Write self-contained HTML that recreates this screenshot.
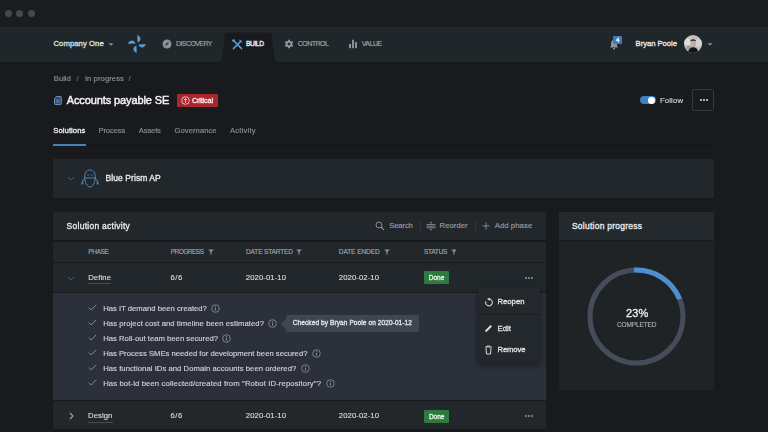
<!DOCTYPE html>
<html><head><meta charset="utf-8">
<style>
*{margin:0;padding:0;box-sizing:border-box}
html,body{width:768px;height:432px;overflow:hidden;background:#191a1e;font-family:"Liberation Sans",sans-serif;position:relative}
.a{position:absolute}
.t{position:absolute;white-space:nowrap;height:20px;line-height:20px;-webkit-text-stroke-width:0.15px}
.b{-webkit-text-stroke-width:0.3px}
.bb{-webkit-text-stroke-width:0.45px}
</style></head><body><div style="position:absolute;left:0;top:0;width:768px;height:432px;filter:blur(0.35px)">
<!-- title bar -->
<div class="a" style="left:0;top:0;width:768px;height:26.5px;background:#1b1c1f"></div>
<div class="a" style="left:5px;top:10px;width:7px;height:7px;border-radius:50%;background:#47484c"></div>
<div class="a" style="left:16px;top:10px;width:7px;height:7px;border-radius:50%;background:#47484c"></div>
<div class="a" style="left:28px;top:10px;width:7px;height:7px;border-radius:50%;background:#47484c"></div>
<!-- nav -->
<div class="a" style="left:0;top:26.5px;width:768px;height:35.2px;background:#20272a"></div>
<svg class="a" style="left:212px;top:30.5px" width="76" height="32" viewBox="0 0 76 32"><path d="M5 32 C9 32 10.2 29 10.8 23.5 L12.6 4.5 C12.8 2.6 13.6 1.5 15.5 1.5 L57 1.5 C58.9 1.5 59.7 2.6 59.9 4.5 L62.2 23.5 C63 29 64 32 68.5 32 Z" fill="#191a1e"/></svg>
<div class="t b" style="left:53.5px;top:34px;font-size:7.7px;letter-spacing:0.06px;color:#dfe1e3">Company One</div>
<svg class="a" style="left:107px;top:42px" width="8" height="5"><path d="M1.5 1.2 L4 3.8 L6.5 1.2Z" fill="#8a8f95"/></svg>
<!-- logo -->
<svg class="a" style="left:127px;top:34px" width="20" height="20" viewBox="0 0 20 20"><g fill="#5a9fd8">
<path id="bl" d="M10.3 1 C14.2 2.8 14.8 6.6 10.6 8.6 Z"/>
<path d="M10.3 1 C14.2 2.8 14.8 6.6 10.6 8.6 Z" transform="rotate(90 10 10)"/>
<path d="M10.3 1 C14.2 2.8 14.8 6.6 10.6 8.6 Z" transform="rotate(180 10 10)"/>
<path d="M10.3 1 C14.2 2.8 14.8 6.6 10.6 8.6 Z" transform="rotate(270 10 10)"/>
</g></svg>
<!-- discovery -->
<svg class="a" style="left:162px;top:39px" width="10" height="10" viewBox="0 0 10 10"><circle cx="5" cy="5" r="4.5" fill="#8b9199"/><path d="M7 3 L4.4 4.4 L3 7 L5.6 5.6Z" fill="#21272a"/></svg>
<div class="t" style="left:176px;top:34px;font-size:7px;letter-spacing:-0.58px;color:#a0a5ab;-webkit-text-stroke-width:0.15px">DISCOVERY</div>
<!-- build -->
<svg class="a" style="left:231.5px;top:38.5px" width="11" height="11" viewBox="0 0 11 11"><g stroke="#5b9bd8" stroke-width="1.5" stroke-linecap="round" fill="none"><path d="M2.2 2.2 L9.6 9.6"/><path d="M9 2 L1.4 9.6"/></g><path d="M7.6 0.4 L10.6 3.4 L9.6 3.6 L7.4 1.4Z" fill="#5b9bd8"/><circle cx="1.6" cy="1.6" r="1.4" fill="#5b9bd8"/></svg>
<div class="t b" style="left:246px;top:34px;font-size:6.7px;letter-spacing:-0.43px;color:#f0f2f4">BUILD</div>
<!-- control -->
<svg class="a" style="left:283.6px;top:39px" width="10" height="10" viewBox="0 0 10 10"><g fill="#8b9199"><circle cx="5" cy="5" r="3.3"/><rect x="4" y="0.7" width="2" height="8.6" rx="0.4"/><rect x="4" y="0.7" width="2" height="8.6" rx="0.4" transform="rotate(60 5 5)"/><rect x="4" y="0.7" width="2" height="8.6" rx="0.4" transform="rotate(-60 5 5)"/></g><circle cx="5" cy="5" r="1.3" fill="#20272a"/></svg>
<div class="t" style="left:297.7px;top:34px;font-size:7px;letter-spacing:-0.5px;color:#a0a5ab;-webkit-text-stroke-width:0.15px">CONTROL</div>
<!-- value -->
<svg class="a" style="left:348px;top:39px" width="10" height="10" viewBox="0 0 10 10"><g fill="#8b9199"><rect x="1" y="5" width="2" height="4.2"/><rect x="4" y="0.7" width="2" height="8.5"/><rect x="7" y="3.1" width="2" height="6.1"/></g></svg>
<div class="t" style="left:361.7px;top:34px;font-size:7px;letter-spacing:-0.5px;color:#a0a5ab;-webkit-text-stroke-width:0.15px">VALUE</div>
<!-- right nav -->
<svg class="a" style="left:608px;top:38px" width="12" height="12" viewBox="0 0 12 12"><path d="M6 2 C3.5 2 3 4 3 6 L3 8 L2 9.5 L10 9.5 L9 8 L9 6 C9 4 8.5 2 6 2Z" fill="#8e949a"/><rect x="5" y="10" width="2" height="1.3" fill="#8e949a"/></svg>
<div class="a" style="left:613px;top:35.6px;width:9.2px;height:8.2px;background:#3b7cc0;border-radius:1px"></div>
<div class="t b" style="left:613px;top:29.5px;width:9.2px;text-align:center;font-size:6px;color:#fff">4</div>
<div class="t b" style="left:635.6px;top:34px;font-size:7.7px;letter-spacing:-0.05px;color:#e6e8ea">Bryan Poole</div>
<svg class="a" style="left:683.8px;top:35.1px" width="18" height="18" viewBox="0 0 18 18"><defs><clipPath id="cp"><circle cx="9" cy="9" r="9"/></clipPath></defs><g clip-path="url(#cp)"><rect width="18" height="18" fill="#bfc3bf"/><circle cx="3.5" cy="7" r="3.5" fill="#dcdfdc"/><circle cx="14.5" cy="8" r="3.8" fill="#d2d5d2"/><circle cx="5" cy="13" r="2.5" fill="#9da19d"/><ellipse cx="9.2" cy="8.6" rx="2.7" ry="3.5" fill="#c4aca2"/><path d="M6.3 6.6 C6.3 3.4 12 3.4 12 6.6 C11 5.5 7.4 5.5 6.3 6.6Z" fill="#2a2324"/><path d="M4 18 C4.5 13.5 7 12.2 9.2 12.2 C11.5 12.2 14 13.5 14.5 18Z" fill="#141414"/></g></svg>
<svg class="a" style="left:706px;top:42px" width="8" height="5"><path d="M1.5 1.2 L4 3.8 L6.5 1.2Z" fill="#8a8f95"/></svg>

<!-- breadcrumb -->
<div class="t" style="left:53.75px;top:68.60px;font-size:7.7px;color:#8e9197">Build</div>
<div class="t" style="left:76.5px;top:68.60px;font-size:7.7px;color:#6e7177">/</div>
<div class="t" style="left:84.9px;top:68.60px;font-size:7.7px;letter-spacing:0.06px;color:#8e9197">In progress</div>
<div class="t" style="left:128.5px;top:68.6px;font-size:7.7px;color:#6e7177">/</div>
<!-- title -->
<svg class="a" style="left:53.8px;top:96px" width="8" height="9" viewBox="0 0 8 9"><path d="M2.6 0.5 L6.4 0.5 Q7.3 0.5 7.3 1.4 L7.3 7.6 Q7.3 8.5 6.4 8.5 L1.4 8.5 Q0.5 8.5 0.5 7.6 L0.5 2.6Z" fill="#2f4c69" stroke="#86acd2" stroke-width="0.8"/><path d="M2.2 4.3 L5.6 4.3 M2.2 6 L5.6 6" stroke="#86acd2" stroke-width="0.7"/></svg>
<div class="t bb" style="left:66.7px;top:89.7px;font-size:11px;letter-spacing:-0.11px;color:#f2f3f5">Accounts payable SE</div>
<div class="a" style="left:176.6px;top:93.6px;width:41px;height:13.3px;background:#a8272c;border-radius:1px"></div>
<svg class="a" style="left:181px;top:95.8px" width="9" height="9" viewBox="0 0 9 9"><circle cx="4.5" cy="4.5" r="3.8" fill="none" stroke="#f0c9ca" stroke-width="0.9"/><path d="M4.5 6.8 L4.5 2.6 M2.9 4.2 L4.5 2.6 L6.1 4.2" fill="none" stroke="#f0c9ca" stroke-width="0.9"/></svg>
<div class="t b" style="left:191.9px;top:90.60px;font-size:7.3px;letter-spacing:-0.17px;color:#fbeeee">Critical</div>
<!-- follow -->
<div class="a" style="left:640px;top:96.1px;width:15.5px;height:8.2px;border-radius:4.1px;background:#3e80c2"></div>
<div class="a" style="left:648px;top:96.8px;width:6.8px;height:6.8px;border-radius:50%;background:#fff"></div>
<div class="t" style="left:659.9px;top:90.50px;font-size:7.7px;letter-spacing:0.18px;color:#d2d5d8">Follow</div>
<div class="a" style="left:692px;top:89.3px;width:22.3px;height:21.7px;border:1px solid #35383d;border-radius:2px"></div>
<div class="a" style="left:699.5px;top:99.4px;width:2px;height:2px;border-radius:50%;background:#e0e2e4"></div>
<div class="a" style="left:702.5px;top:99.4px;width:2px;height:2px;border-radius:50%;background:#e0e2e4"></div>
<div class="a" style="left:705.5px;top:99.4px;width:2px;height:2px;border-radius:50%;background:#e0e2e4"></div>
<!-- tabs -->
<div class="t b" style="left:53.3px;top:120.70px;font-size:7.7px;letter-spacing:0.05px;color:#eceef0">Solutions</div>
<div class="t" style="left:98.4px;top:120.70px;font-size:7.7px;letter-spacing:-0.13px;color:#8c9096">Process</div>
<div class="t" style="left:138.8px;top:120.70px;font-size:7.7px;letter-spacing:-0.18px;color:#8c9096">Assets</div>
<div class="t" style="left:174.5px;top:120.70px;font-size:7.7px;letter-spacing:0.03px;color:#8c9096">Governance</div>
<div class="t" style="left:229.9px;top:120.70px;font-size:7.7px;letter-spacing:0.19px;color:#8c9096">Activity</div>
<div class="a" style="left:53px;top:144.8px;width:661px;height:1.4px;background:#141518"></div>
<div class="a" style="left:53px;top:144px;width:33px;height:2.2px;background:#4a80b8"></div>

<!-- blue prism card -->
<div class="a" style="left:53px;top:159.3px;width:661.2px;height:39.2px;background:#21272a"></div>
<svg class="a" style="left:67px;top:176px" width="8" height="5"><path d="M1 1 L4 4 L7 1" fill="none" stroke="#5a6068" stroke-width="0.9"/></svg>
<svg class="a" style="left:80px;top:169px" width="20" height="19" viewBox="0 0 20 19"><g fill="none" stroke="#5b8fc4" stroke-width="0.9"><path d="M10 1 C14 1 15.3 4 15.3 8 C15.3 13 13 18 10 18 C7 18 4.7 13 4.7 8 C4.7 4 6 1 10 1Z"/><path d="M4.8 9 L15.2 9"/><path d="M5 9 L2.5 12 L1.5 15.5 M2.5 12 L3.2 15.5"/><path d="M15 9 L17.5 12 L18.5 15.5 M17.5 12 L16.8 15.5"/></g><circle cx="8" cy="6" r="0.7" fill="#5b8fc4"/><circle cx="12" cy="6" r="0.7" fill="#5b8fc4"/></svg>
<div class="t b" style="left:105.6px;top:168.1px;font-size:8.5px;letter-spacing:0.07px;color:#eceef0">Blue Prism AP</div>

<!-- solution activity card -->
<div class="a" style="left:53px;top:212px;width:493px;height:220px;background:#21272a"></div>
<div class="t b" style="left:66.6px;top:215.8px;font-size:8.5px;letter-spacing:0.26px;color:#eceef0">Solution activity</div>
<svg class="a" style="left:375px;top:221px" width="10" height="10" viewBox="0 0 10 10"><circle cx="4" cy="4" r="3" fill="none" stroke="#8c9096" stroke-width="1"/><path d="M6.2 6.2 L9 9" stroke="#8c9096" stroke-width="1.1"/></svg>
<div class="t" style="left:389.2px;top:215.8px;font-size:7.7px;letter-spacing:-0.13px;color:#9a9ea4">Search</div>
<div class="a" style="left:419.5px;top:221px;width:1px;height:10.5px;background:#2f3439"></div>
<svg class="a" style="left:426px;top:221px" width="10" height="10" viewBox="0 0 10 10"><g stroke="#8c9096" stroke-width="0.9"><path d="M0.5 3.6 L9.5 3.6 M0.5 5.2 L9.5 5.2 M0.5 6.8 L9.5 6.8"/></g><path d="M3.6 2.2 L5 0.6 L6.4 2.2Z M3.6 8.2 L5 9.8 L6.4 8.2Z" fill="#8c9096"/></svg>
<div class="t" style="left:439.6px;top:215.8px;font-size:7.7px;letter-spacing:0.05px;color:#9a9ea4">Reorder</div>
<div class="a" style="left:475px;top:221px;width:1px;height:10.5px;background:#2f3439"></div>
<svg class="a" style="left:482px;top:222px" width="8" height="8" viewBox="0 0 8 8"><path d="M4 0.5 L4 7.5 M0.5 4 L7.5 4" stroke="#8c9096" stroke-width="0.9"/></svg>
<div class="t" style="left:494.7px;top:215.8px;font-size:7.7px;letter-spacing:0.09px;color:#9a9ea4">Add phase</div>
<div class="a" style="left:53px;top:240.3px;width:493px;height:1.8px;background:#17191c"></div>
<!-- header row -->
<div class="t" style="left:88.2px;top:241.6px;font-size:6.5px;letter-spacing:-0.35px;color:#a0a5ab">PHASE</div>
<div class="t" style="left:170.7px;top:241.6px;font-size:6.5px;letter-spacing:-0.5px;color:#a0a5ab">PROGRESS</div>
<div class="t" style="left:246px;top:241.6px;font-size:6.5px;letter-spacing:-0.13px;color:#a0a5ab">DATE STARTED</div>
<div class="t" style="left:338.75px;top:241.6px;font-size:6.5px;letter-spacing:-0.05px;color:#a0a5ab">DATE ENDED</div>
<div class="t" style="left:423.9px;top:241.6px;font-size:6.5px;letter-spacing:-0.24px;color:#a0a5ab">STATUS</div>
<svg class="a" style="left:207.5px;top:248.5px" width="6" height="6" viewBox="0 0 6 6"><path d="M0.3 0.5 L5.7 0.5 L3.6 3 L3.6 5.5 L2.4 5.5 L2.4 3Z" fill="#8a8e94"/></svg>
<svg class="a" style="left:296.4px;top:248.5px" width="6" height="6" viewBox="0 0 6 6"><path d="M0.3 0.5 L5.7 0.5 L3.6 3 L3.6 5.5 L2.4 5.5 L2.4 3Z" fill="#8a8e94"/></svg>
<svg class="a" style="left:383.7px;top:248.5px" width="6" height="6" viewBox="0 0 6 6"><path d="M0.3 0.5 L5.7 0.5 L3.6 3 L3.6 5.5 L2.4 5.5 L2.4 3Z" fill="#8a8e94"/></svg>
<svg class="a" style="left:451.4px;top:248.5px" width="6" height="6" viewBox="0 0 6 6"><path d="M0.3 0.5 L5.7 0.5 L3.6 3 L3.6 5.5 L2.4 5.5 L2.4 3Z" fill="#8a8e94"/></svg>
<div class="a" style="left:53px;top:261.5px;width:493px;height:1px;background:#17191c"></div>
<!-- row define -->
<svg class="a" style="left:67px;top:276px" width="8" height="5"><path d="M1 1 L4 4 L7 1" fill="none" stroke="#5a6068" stroke-width="0.9"/></svg>
<div class="t" style="left:88.2px;top:267.7px;font-size:7.7px;letter-spacing:0.11px;color:#d8dadd">Define</div>
<div class="a" style="left:88px;top:283px;width:23px;height:1px;background:#464b51"></div>
<div class="t" style="left:170.6px;top:267.7px;font-size:7.7px;letter-spacing:0.46px;color:#d8dadd">6/6</div>
<div class="t" style="left:245.8px;top:267.7px;font-size:7.7px;letter-spacing:0.1px;color:#d8dadd">2020-01-10</div>
<div class="t" style="left:338.75px;top:267.7px;font-size:7.7px;letter-spacing:0.1px;color:#d8dadd">2020-02-10</div>
<div class="a" style="left:424px;top:271.3px;width:25px;height:13px;background:#2c7a3d;border-radius:1px"></div>
<div class="t b" style="left:424px;top:268.4px;width:25px;text-align:center;font-size:6.5px;letter-spacing:0px;color:#e8f3ea">Done</div>
<div class="a" style="left:524.7px;top:277px;width:2px;height:2px;border-radius:50%;background:#8f949a"></div>
<div class="a" style="left:527.7px;top:277px;width:2px;height:2px;border-radius:50%;background:#8f949a"></div>
<div class="a" style="left:530.7px;top:277px;width:2px;height:2px;border-radius:50%;background:#8f949a"></div>
<div class="a" style="left:53px;top:291.5px;width:493px;height:1.5px;background:#17191c"></div>
<!-- expanded -->
<div class="a" style="left:53px;top:293px;width:493px;height:107px;background:#2b303a"></div>
<svg class="a" style="left:88px;top:304.3px" width="9" height="7" viewBox="0 0 9 7"><path d="M0.8 3.6 L3.2 6 L8.2 0.8" fill="none" stroke="#858a91" stroke-width="1"/></svg>
<div class="t" style="left:103.2px;top:298.9px;font-size:7.7px;letter-spacing:0.0px;color:#cfd2d6;-webkit-text-stroke:0.15px #cfd2d6">Has IT demand been created?</div>
<svg class="a" style="left:211.1px;top:303.8px" width="9" height="9" viewBox="0 0 9 9"><circle cx="4.5" cy="4.5" r="3.8" fill="none" stroke="#8f949a" stroke-width="0.8"/><path d="M4.5 3.8 L4.5 6.6" stroke="#8f949a" stroke-width="0.9"/><circle cx="4.5" cy="2.5" r="0.55" fill="#8f949a"/></svg>
<svg class="a" style="left:88px;top:319.3px" width="9" height="7" viewBox="0 0 9 7"><path d="M0.8 3.6 L3.2 6 L8.2 0.8" fill="none" stroke="#858a91" stroke-width="1"/></svg>
<div class="t" style="left:103.2px;top:313.9px;font-size:7.7px;letter-spacing:0.07px;color:#cfd2d6;-webkit-text-stroke:0.15px #cfd2d6">Has project cost and timeline been estimated?</div>
<svg class="a" style="left:268.0px;top:318.8px" width="9" height="9" viewBox="0 0 9 9"><circle cx="4.5" cy="4.5" r="3.8" fill="none" stroke="#8f949a" stroke-width="0.8"/><path d="M4.5 3.8 L4.5 6.6" stroke="#8f949a" stroke-width="0.9"/><circle cx="4.5" cy="2.5" r="0.55" fill="#8f949a"/></svg>
<svg class="a" style="left:88px;top:334.3px" width="9" height="7" viewBox="0 0 9 7"><path d="M0.8 3.6 L3.2 6 L8.2 0.8" fill="none" stroke="#858a91" stroke-width="1"/></svg>
<div class="t" style="left:103.2px;top:328.9px;font-size:7.7px;letter-spacing:0.01px;color:#cfd2d6;-webkit-text-stroke:0.15px #cfd2d6">Has Roll-out team been secured?</div>
<svg class="a" style="left:222.1px;top:333.8px" width="9" height="9" viewBox="0 0 9 9"><circle cx="4.5" cy="4.5" r="3.8" fill="none" stroke="#8f949a" stroke-width="0.8"/><path d="M4.5 3.8 L4.5 6.6" stroke="#8f949a" stroke-width="0.9"/><circle cx="4.5" cy="2.5" r="0.55" fill="#8f949a"/></svg>
<svg class="a" style="left:88px;top:349.3px" width="9" height="7" viewBox="0 0 9 7"><path d="M0.8 3.6 L3.2 6 L8.2 0.8" fill="none" stroke="#858a91" stroke-width="1"/></svg>
<div class="t" style="left:103.2px;top:343.9px;font-size:7.7px;letter-spacing:0.0px;color:#cfd2d6;-webkit-text-stroke:0.15px #cfd2d6">Has Process SMEs needed for development been secured?</div>
<svg class="a" style="left:311.8px;top:348.8px" width="9" height="9" viewBox="0 0 9 9"><circle cx="4.5" cy="4.5" r="3.8" fill="none" stroke="#8f949a" stroke-width="0.8"/><path d="M4.5 3.8 L4.5 6.6" stroke="#8f949a" stroke-width="0.9"/><circle cx="4.5" cy="2.5" r="0.55" fill="#8f949a"/></svg>
<svg class="a" style="left:88px;top:364.3px" width="9" height="7" viewBox="0 0 9 7"><path d="M0.8 3.6 L3.2 6 L8.2 0.8" fill="none" stroke="#858a91" stroke-width="1"/></svg>
<div class="t" style="left:103.2px;top:358.9px;font-size:7.7px;letter-spacing:0.04px;color:#cfd2d6;-webkit-text-stroke:0.15px #cfd2d6">Has functional IDs and Domain accounts been ordered?</div>
<svg class="a" style="left:301.1px;top:363.8px" width="9" height="9" viewBox="0 0 9 9"><circle cx="4.5" cy="4.5" r="3.8" fill="none" stroke="#8f949a" stroke-width="0.8"/><path d="M4.5 3.8 L4.5 6.6" stroke="#8f949a" stroke-width="0.9"/><circle cx="4.5" cy="2.5" r="0.55" fill="#8f949a"/></svg>
<svg class="a" style="left:88px;top:379.3px" width="9" height="7" viewBox="0 0 9 7"><path d="M0.8 3.6 L3.2 6 L8.2 0.8" fill="none" stroke="#858a91" stroke-width="1"/></svg>
<div class="t" style="left:103.2px;top:373.9px;font-size:7.7px;letter-spacing:0.12px;color:#cfd2d6;-webkit-text-stroke:0.15px #cfd2d6">Has bot-id been collected/created from &quot;Robot ID-repository&quot;?</div>
<svg class="a" style="left:325.5px;top:378.8px" width="9" height="9" viewBox="0 0 9 9"><circle cx="4.5" cy="4.5" r="3.8" fill="none" stroke="#8f949a" stroke-width="0.8"/><path d="M4.5 3.8 L4.5 6.6" stroke="#8f949a" stroke-width="0.9"/><circle cx="4.5" cy="2.5" r="0.55" fill="#8f949a"/></svg>
<!-- tooltip -->
<svg class="a" style="left:281px;top:317.6px" width="6" height="12" viewBox="0 0 6 12"><path d="M0 6 L5 0.5 L5 11.5Z" fill="#3f4652"/></svg>
<div class="a" style="left:285.8px;top:315.3px;width:133.2px;height:16.7px;background:#3f4652;border-radius:1px"></div>
<div class="t b" style="left:292.8px;top:313px;font-size:6.5px;letter-spacing:0.1px;color:#e4e6e9">Checked by Bryan Poole on 2020-01-12</div>
<div class="a" style="left:53px;top:400px;width:493px;height:1px;background:#17191c"></div>
<!-- row design -->
<svg class="a" style="left:69px;top:412px" width="5" height="8"><path d="M1 1 L4 4 L1 7" fill="none" stroke="#989da3" stroke-width="1.2"/></svg>
<div class="t" style="left:88px;top:406px;font-size:7.7px;letter-spacing:0.09px;color:#d8dadd">Design</div>
<div class="a" style="left:88px;top:422px;width:25px;height:1px;background:#464b51"></div>
<div class="t" style="left:170.6px;top:406px;font-size:7.7px;letter-spacing:0.46px;color:#d8dadd">6/6</div>
<div class="t" style="left:245.8px;top:406px;font-size:7.7px;letter-spacing:0.1px;color:#d8dadd">2020-01-10</div>
<div class="t" style="left:338.75px;top:406px;font-size:7.7px;letter-spacing:0.1px;color:#d8dadd">2020-02-10</div>
<div class="a" style="left:424px;top:409.6px;width:25.4px;height:13.3px;background:#2c7a3d;border-radius:1px"></div>
<div class="t b" style="left:424px;top:406.8px;width:25.4px;text-align:center;font-size:6.5px;letter-spacing:0px;color:#e8f3ea">Done</div>
<div class="a" style="left:525px;top:415.3px;width:2px;height:2px;border-radius:50%;background:#8f949a"></div>
<div class="a" style="left:528px;top:415.3px;width:2px;height:2px;border-radius:50%;background:#8f949a"></div>
<div class="a" style="left:531px;top:415.3px;width:2px;height:2px;border-radius:50%;background:#8f949a"></div>
<div class="a" style="left:53px;top:428.8px;width:493px;height:3.2px;background:#18191c"></div>

<!-- menu -->
<div class="a" style="left:477.6px;top:286.5px;width:62.8px;height:76.8px;background:#22282b;box-shadow:0 2px 6px rgba(0,0,0,0.45)"></div>
<div class="a" style="left:477.4px;top:314px;width:62.5px;height:1px;background:#1a1d20"></div>
<svg class="a" style="left:483.5px;top:297px" width="10" height="10" viewBox="0 0 10 10"><path d="M5 2.1 A3.4 3.4 0 1 1 1.8 4.3" fill="none" stroke="#d0d3d6" stroke-width="1.1"/><path d="M3 2.1 L5.6 0.5 L5.6 3.7Z" fill="#d0d3d6"/></svg>
<div class="t b" style="left:497.5px;top:292px;font-size:7.7px;letter-spacing:0px;color:#e0e2e5">Reopen</div>
<svg class="a" style="left:484px;top:324px" width="9" height="9" viewBox="0 0 9 9"><path d="M1 8 L1.5 6 L6.5 1 L8 2.5 L3 7.5Z" fill="#d8dadd"/></svg>
<div class="t b" style="left:497.5px;top:318.60px;font-size:7.7px;letter-spacing:0.08px;color:#e0e2e5">Edit</div>
<svg class="a" style="left:484px;top:344.5px" width="9" height="10" viewBox="0 0 9 10"><path d="M1 2 L8 2 M3 2 L3 1 L6 1 L6 2" fill="none" stroke="#d8dadd" stroke-width="0.9"/><path d="M2 3 L2.5 9 L6.5 9 L7 3" fill="none" stroke="#d8dadd" stroke-width="1"/></svg>
<div class="t b" style="left:497.5px;top:340.00px;font-size:7.7px;letter-spacing:-0.13px;color:#e0e2e5">Remove</div>

<!-- progress card -->
<div class="a" style="left:558.8px;top:211.6px;width:155.5px;height:178.4px;background:#1f2326"></div>
<div class="a" style="left:558.8px;top:211.6px;width:155.5px;height:28.4px;background:#24292d"></div>
<div class="a" style="left:558.8px;top:240px;width:155.5px;height:1px;background:#1a1d20"></div>
<div class="t b" style="left:571.9px;top:215.5px;font-size:8.5px;letter-spacing:0.25px;color:#eceef0">Solution progress</div>
<svg class="a" style="left:586px;top:265.5px" width="101" height="101" viewBox="0 0 101 101">
<circle cx="50.5" cy="50.5" r="46.5" fill="none" stroke="#464d5a" stroke-width="5"/>
<path d="M48.07 4.06 A46.5 46.5 0 0 1 93.61 33.08" fill="none" stroke="#4a90d0" stroke-width="5"/>
</svg>
<div class="t b" style="left:625.9px;top:302.75px;font-size:11px;letter-spacing:0.18px;color:#eef0f2">23%</div>
<div class="t" style="left:617px;top:314.90px;font-size:6.5px;letter-spacing:-0.13px;color:#a9adb2">COMPLETED</div>
</div></body></html>
